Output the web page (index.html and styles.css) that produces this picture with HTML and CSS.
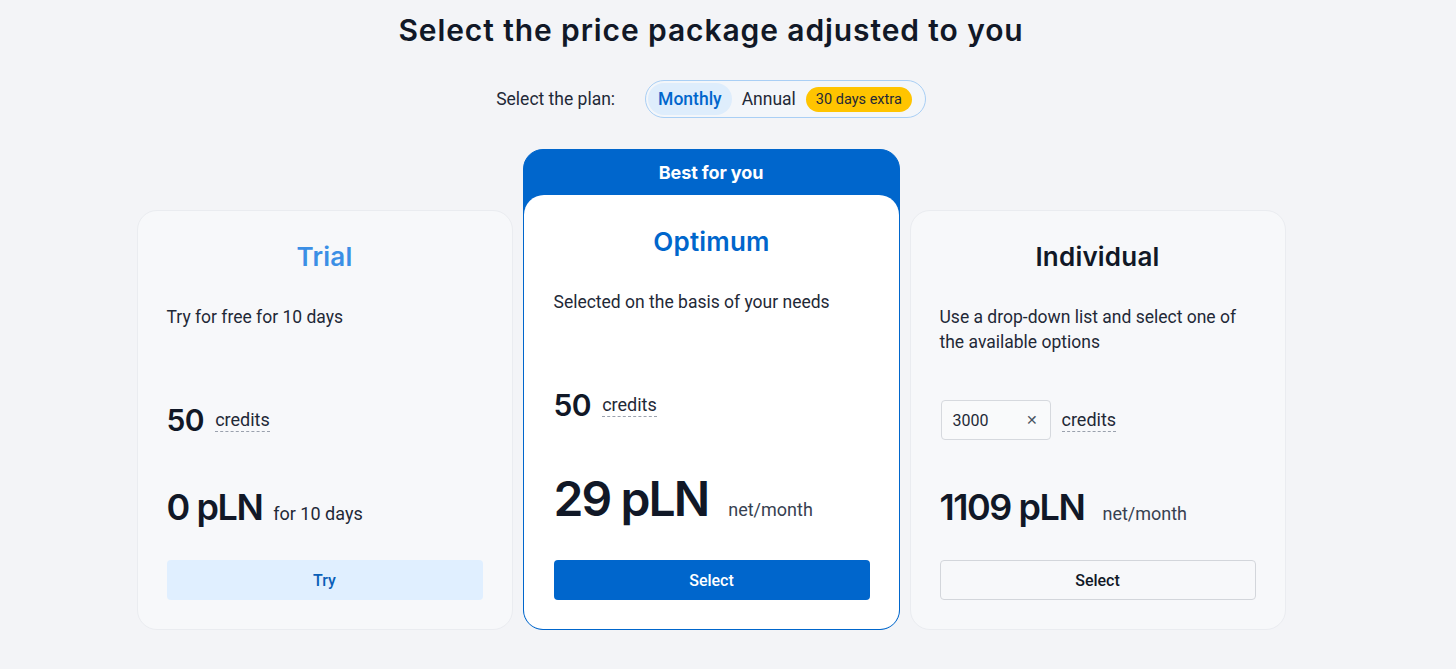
FILE: index.html
```html
<!DOCTYPE html>
<html lang="en">
<head>
<meta charset="utf-8">
<title>Pricing</title>
<link rel="stylesheet" href="styles.css">
</head>
<body>
<div class="page">
  <h1 class="heading">Select the price package adjusted to you</h1>

  <div class="plan-row">
    <span class="plan-label">Select the plan:</span>
    <div class="toggle">
      <span class="toggle-opt active">Monthly</span>
      <span class="toggle-opt">Annual</span>
      <span class="extra">30 days extra</span>
    </div>
  </div>

  <div class="cards">
    <div class="card">
      <div class="card-body">
        <h2 class="title title-trial">Trial</h2>
        <p class="desc">Try for free for 10 days</p>
        <div class="credits-row">
          <span class="credits-num">50</span>
          <span class="credits-label">credits</span>
        </div>
        <div class="price-row">
          <span class="price">0 pLN</span>
          <span class="period period-trial">for 10 days</span>
        </div>
        <button class="btn btn-try">Try</button>
      </div>
    </div>

    <div class="card card-featured">
      <div class="featured-head">Best for you</div>
      <div class="card-body card-body-featured">
        <h2 class="title title-optimum">Optimum</h2>
        <p class="desc">Selected on the basis of your needs</p>
        <div class="credits-row">
          <span class="credits-num">50</span>
          <span class="credits-label">credits</span>
        </div>
        <div class="price-row price-row-big">
          <span class="price price-big">29 pLN</span>
          <span class="period period-optimum">net/month</span>
        </div>
        <button class="btn btn-primary">Select</button>
      </div>
    </div>

    <div class="card">
      <div class="card-body">
        <h2 class="title title-individual">Individual</h2>
        <p class="desc">Use a drop-down list and select one of the available options</p>
        <div class="credits-row">
          <div class="select-box">
            <span class="select-value">3000</span>
            <span class="select-clear">&#x2715;</span>
          </div>
          <span class="credits-label">credits</span>
        </div>
        <div class="price-row">
          <span class="price">1109 pLN</span>
          <span class="period period-individual">net/month</span>
        </div>
        <button class="btn btn-outline">Select</button>
      </div>
    </div>
  </div>
</div>
</body>
</html>
```

FILE: styles.css
```css
* { box-sizing: border-box; }

html, body {
  margin: 0;
  padding: 0;
  background: #f3f4f7;
  font-family: Roboto, "Liberation Sans", sans-serif;
  color: #1f2937;
}

.page {
  width: 1422px;
  display: flex;
  flex-direction: column;
  align-items: center;
}

.heading {
  margin: 12px 0 0;
  font-family: Inter, "Liberation Sans", sans-serif;
  font-weight: 600;
  font-size: 30px;
  line-height: 36px;
  letter-spacing: 0.9px;
  color: #111827;
}

.plan-row {
  margin-top: 32px;
  display: flex;
  align-items: center;
  gap: 30px;
  height: 38px;
}

.plan-label {
  font-size: 17.5px;
  color: #1f2937;
}

.toggle {
  display: flex;
  align-items: center;
  height: 38px;
  padding: 0 13px 0 2px;
  border: 1px solid #a9cff5;
  border-radius: 19px;
  background: #f3f6fa;
}

.toggle-opt {
  font-size: 17.5px;
  line-height: 32px;
  height: 32px;
  padding: 0 10px;
  color: #1f2937;
  border-radius: 16px;
}

.toggle-opt.active {
  background: #deedfc;
  color: #0066cc;
  font-weight: 500;
}

.extra {
  height: 25px;
  line-height: 25px;
  padding: 0 10px;
  border-radius: 13px;
  background: #ffc400;
  color: #1f2937;
  font-size: 14.5px;
}

.cards {
  margin-top: 31px;
  display: flex;
  align-items: flex-end;
  gap: 10px;
}

.card {
  width: 376px;
  border: 1px solid #eaecf0;
  border-radius: 20px;
  background: #f7f8fa;
  overflow: hidden;
}

.card-featured {
  width: 377px;
  border-color: #0066cc;
  background: #0066cc;
}

.featured-head {
  height: 45px;
  display: flex;
  align-items: center;
  justify-content: center;
  color: #ffffff;
  font-family: Inter, "Liberation Sans", sans-serif;
  font-weight: 700;
  font-size: 18px;
  letter-spacing: -0.1px;
}

.card-body {
  display: flex;
  flex-direction: column;
  padding: 28px 29px 29px 29px;
}

.card-body-featured {
  background: #ffffff;
  border-radius: 20px 20px 0 0;
  padding: 29px 29px 29px 30px;
}

.title {
  margin: 0;
  text-align: center;
  font-family: Inter, "Liberation Sans", sans-serif;
  font-weight: 600;
  font-size: 26px;
  line-height: 36px;
  letter-spacing: 0.2px;
}

.title-trial { color: #3b8fe5; }
.title-optimum { color: #0066cc; }
.title-individual { color: #111827; }

.desc {
  margin: 30px 0 0;
  min-height: 50px;
  font-size: 17.5px;
  line-height: 25px;
  color: #1f2937;
}

.credits-row {
  margin-top: 45px;
  height: 40px;
  display: flex;
  align-items: center;
  gap: 11px;
}

.credits-num {
  font-family: Inter, "Liberation Sans", sans-serif;
  font-weight: 600;
  font-size: 30px;
  letter-spacing: -0.5px;
  color: #111827;
}

.credits-label {
  font-size: 18px;
  line-height: 22px;
  color: #1f2937;
  border-bottom: 1px dashed #9aa1ad;
  margin-top: 1px;
}

.select-box {
  width: 110px;
  height: 40px;
  display: flex;
  align-items: center;
  justify-content: space-between;
  padding: 0 12px 0 11px;
  border: 1px solid #d6d9de;
  border-radius: 4px;
  background: #f9fafb;
  margin-left: 1px;
}

.select-value {
  font-size: 16px;
  color: #1f2937;
}

.select-clear {
  font-size: 14px;
  color: #4b5563;
}

.price-row {
  margin-top: 43px;
  height: 48px;
  display: flex;
  align-items: baseline;
}

.price-row-big {
  margin-top: 42px;
  height: 64px;
}

.price {
  font-family: Inter, "Liberation Sans", sans-serif;
  font-weight: 600;
  font-size: 36px;
  line-height: 48px;
  letter-spacing: -0.04em;
  color: #111827;
}

.price-big {
  font-size: 48px;
  line-height: 64px;
}

.period {
  font-size: 18px;
  color: #1f2937;
}

.period-trial { margin-left: 11px; }
.period-optimum { margin-left: 20px; color: #374151; }
.period-individual { margin-left: 18px; color: #374151; }

.btn {
  margin-top: 29px;
  height: 40px;
  width: 100%;
  border-radius: 4px;
  font-family: Roboto, "Liberation Sans", sans-serif;
  font-size: 16px;
  font-weight: 500;
  cursor: pointer;
}

.btn-try {
  border: none;
  background: #e0efff;
  color: #0a5fb8;
}

.btn-primary {
  border: none;
  background: #0066cc;
  color: #ffffff;
}

.btn-outline {
  border: 1px solid #d3d6db;
  background: #f7f8fa;
  color: #111827;
}
```
